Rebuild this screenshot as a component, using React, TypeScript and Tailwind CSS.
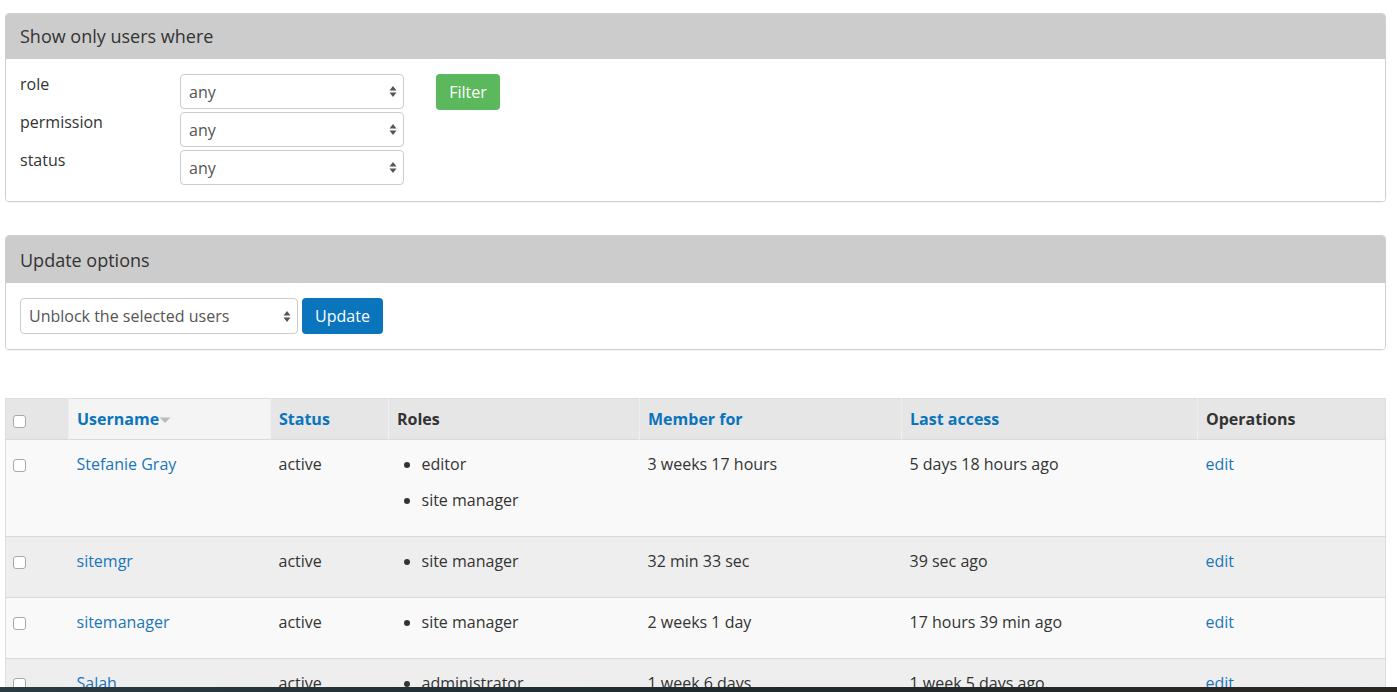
import React from "react";

const font = { fontFamily: '"Open Sans", "Noto Sans", sans-serif' };

function Arrows() {
  return (
    <svg width="8" height="13" viewBox="0 0 8 13" className="shrink-0">
      <path d="M4 1 L7.5 5.5 L0.5 5.5 Z" fill="#555" />
      <path d="M4 12 L7.5 7.5 L0.5 7.5 Z" fill="#555" />
    </svg>
  );
}

function Select({ value, width, height }: { value: string; width: string; height: string }) {
  return (
    <div
      className={`flex items-center justify-between ${width} ${height} border border-[#cccccc] rounded-[4px] bg-white pl-[8px] pr-[6px] text-[16px] text-[#555555]`}
    >
      <span>{value}</span>
      <Arrows />
    </div>
  );
}

function Checkbox() {
  return <span className="block w-[13px] h-[13px] border border-[#a9a9a9] rounded-[3px] bg-white" />;
}

type Row = {
  name: string;
  roles: string[];
  member: string;
  last: string;
  bg: string;
};

const rows: Row[] = [
  { name: "Stefanie Gray", roles: ["editor", "site manager"], member: "3 weeks 17 hours", last: "5 days 18 hours ago", bg: "bg-[#f9f9f9]" },
  { name: "sitemgr", roles: ["site manager"], member: "32 min 33 sec", last: "39 sec ago", bg: "bg-[#eeeeee]" },
  { name: "sitemanager", roles: ["site manager"], member: "2 weeks 1 day", last: "17 hours 39 min ago", bg: "bg-[#f9f9f9]" },
  { name: "Salah", roles: ["administrator"], member: "1 week 6 days", last: "1 week 5 days ago", bg: "bg-[#eeeeee]" },
];

export default function App() {
  return (
    <div className="w-full h-[692px] flex flex-col overflow-hidden bg-white text-[#333333]" style={font}>
      <div className="flex-1 min-h-0 overflow-hidden pl-[5px] pr-[11px] pt-[13px]">
        {/* Panel 1 */}
        <div className="border border-[#cfcfcf] rounded-[4px] overflow-hidden shadow-[0_1px_1px_rgba(0,0,0,0.05)]">
          <div className="h-[45px] bg-[#cccccc] px-[14px] flex items-center text-[18px] text-[#333333]">
            Show only users where
          </div>
          <div className="bg-white pl-[14px] pt-[15px] pb-[16px] flex items-start">
            <div className="flex flex-col gap-[3px]">
              {["role", "permission", "status"].map((l) => (
                <div key={l} className="flex items-start h-[35px]">
                  <div className="w-[160px] text-[16px] leading-[22px] -mt-[1px]">{l}</div>
                  <Select value="any" width="w-[224px]" height="h-[35px]" />
                </div>
              ))}
            </div>
            <button className="ml-[32px] h-[36px] w-[64px] rounded-[4px] bg-[#5cb85c] text-white text-[16px]">
              Filter
            </button>
          </div>
        </div>

        {/* Panel 2 */}
        <div className="mt-[33px] border border-[#cfcfcf] rounded-[4px] overflow-hidden shadow-[0_1px_1px_rgba(0,0,0,0.05)]">
          <div className="h-[47px] bg-[#cccccc] px-[14px] pt-[1px] flex items-center text-[18px] text-[#333333]">
            Update options
          </div>
          <div className="bg-white pl-[14px] pt-[15px] pb-[15px] flex items-center gap-[4px]">
            <Select value="Unblock the selected users" width="w-[278px]" height="h-[36px]" />
            <button className="h-[36px] w-[81px] rounded-[4px] bg-[#0a74bd] text-white text-[16px]">Update</button>
          </div>
        </div>

        {/* Table */}
        <table className="mt-[48px] w-full table-fixed border-collapse border border-[#dddddd] text-[16px]">
          <colgroup>
            <col className="w-[63px]" />
            <col className="w-[202px]" />
            <col className="w-[118px]" />
            <col className="w-[251px]" />
            <col className="w-[262px]" />
            <col className="w-[296px]" />
            <col className="w-[188px]" />
          </colgroup>
          <thead>
            <tr className="bg-[#e6e6e6] text-left">
              <th className="py-[9px] pl-[7px] leading-[22px] align-middle">
                <div className="pt-[5px]"><Checkbox /></div>
              </th>
              <th className="py-[9px] px-[8px] leading-[22px] font-bold bg-[#f4f4f4] border-l border-[#eeeeee]">
                <span className="inline-flex items-center text-[#0a74bd]">
                  Username
                  <svg width="12" height="7" viewBox="0 0 12 7" className="mt-[3px]">
                    <path d="M0.5 0.5 L11.5 0.5 L6 6 Z" fill="#bbbbbb" />
                  </svg>
                </span>
              </th>
              <th className="py-[9px] px-[8px] leading-[22px] font-bold text-[#0a74bd] border-l border-[#eeeeee]">Status</th>
              <th className="py-[9px] px-[8px] leading-[22px] font-bold text-[#333333] border-l border-[#eeeeee]">Roles</th>
              <th className="py-[9px] px-[8px] leading-[22px] font-bold text-[#0a74bd] border-l border-[#eeeeee]">Member for</th>
              <th className="py-[9px] px-[8px] leading-[22px] font-bold text-[#0a74bd] border-l border-[#eeeeee]">Last access</th>
              <th className="py-[9px] px-[8px] leading-[22px] font-bold text-[#333333] border-l border-[#eeeeee]">Operations</th>
            </tr>
          </thead>
          <tbody>
            {rows.map((r) => (
              <tr key={r.name} className={`${r.bg} border-t border-[#d9d9d9] align-top`}>
                <td className="pt-[13px] pl-[7px]">
                  <div className="pt-[6px]"><Checkbox /></div>
                </td>
                <td className="pt-[13px] pb-[11px] px-[8px] leading-[22px] text-[#1a76b9]">{r.name}</td>
                <td className="pt-[13px] pb-[11px] px-[8px] leading-[22px]">active</td>
                <td className="pt-[13px] pb-[11px] px-[8px] leading-[22px]">
                  <ul className="list-disc pl-[25px]">
                    {r.roles.map((role) => (
                      <li key={role} className="mb-[14px]">{role}</li>
                    ))}
                  </ul>
                </td>
                <td className="pt-[13px] pb-[11px] px-[8px] leading-[22px]">{r.member}</td>
                <td className="pt-[13px] pb-[11px] px-[8px] leading-[22px]">{r.last}</td>
                <td className="pt-[13px] pb-[11px] px-[8px] leading-[22px] text-[#1a76b9]">edit</td>
              </tr>
            ))}
          </tbody>
        </table>
      </div>
      <div className="h-[5px] shrink-0 bg-gradient-to-r from-[#2b3b42] via-[#1e2a2e] to-[#2a2622]" />
    </div>
  );
}
